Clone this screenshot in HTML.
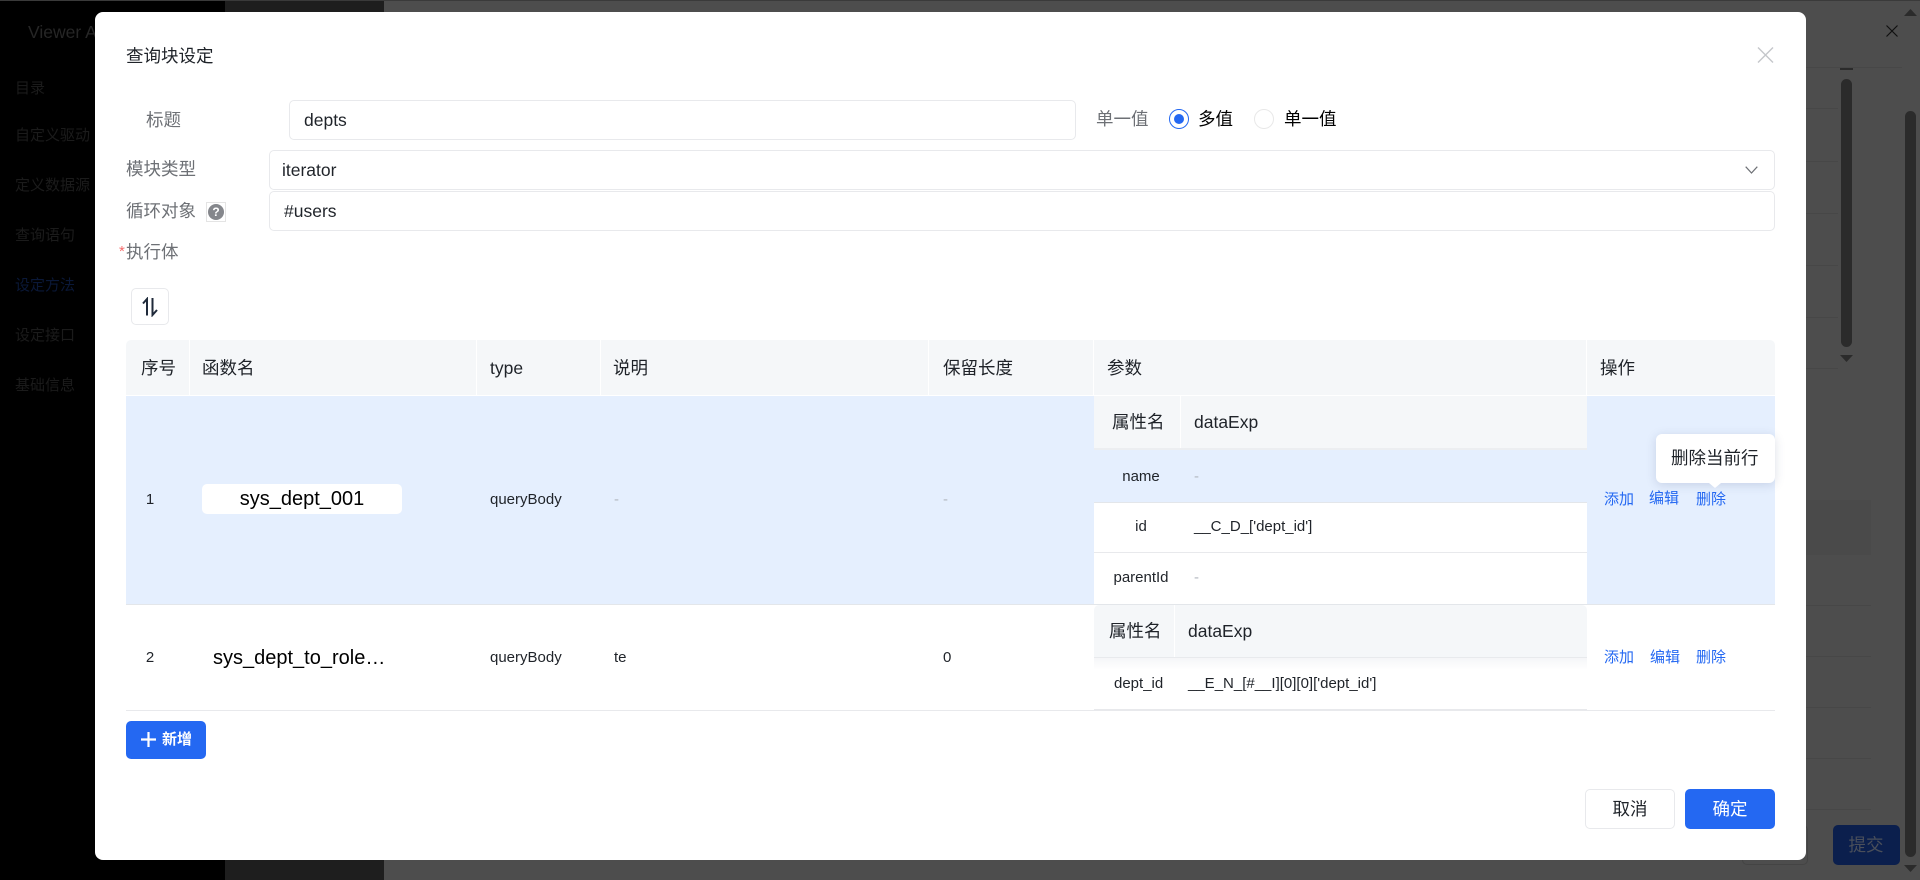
<!DOCTYPE html>
<html lang="zh-CN">
<head>
<meta charset="utf-8">
<title>查询块设定</title>
<style>
html,body{margin:0;padding:0;width:1920px;height:880px;overflow:hidden;background:#4d4d4d}
body{position:relative;font-family:"Liberation Sans","Noto Sans CJK SC",sans-serif;font-size:17.5px;color:#1f2329}
div,span,svg{position:absolute;box-sizing:border-box}
.t{white-space:nowrap;line-height:24px;height:24px}
.s{font-size:15px;line-height:20px;height:20px}
.c{transform:translateX(-50%)}
.g{color:#6d7075}
.l{color:#2468f2}
.d{color:#b3b8c0}
.side{color:#1b1b1b;font-size:15px;left:15px}
.box{border:1.25px solid #e8e9ec;border-radius:5px;background:#fff}
.bgl{background:#474747;height:1px}
.sb{background:#2b2b2b;border-radius:6px}
</style>
</head>
<body>
<!-- backdrop -->
<div style="left:0;top:0;width:225px;height:880px;background:#000"></div>
<div style="left:225px;top:0;width:159px;height:880px;background:#1e1e1e"></div>
<div style="left:0;top:0;width:1920px;height:1px;background:#3a3a3a"></div>
<div class="t" style="left:28px;top:20px;color:#262626;font-size:17.5px">Viewer Admin</div>
<div class="t side" style="top:77px">目录</div>
<div class="t side" style="top:124px">自定义驱动</div>
<div class="t side" style="top:174px">定义数据源</div>
<div class="t side" style="top:224px">查询语句</div>
<div class="t side" style="top:274px;color:#0a1838">设定方法</div>
<div class="t side" style="top:324px">设定接口</div>
<div class="t side" style="top:374px">基础信息</div>
<div class="bgl" style="left:1806px;top:67px;width:96px"></div>
<div class="bgl" style="left:1806px;top:108px;width:32px"></div>
<div class="bgl" style="left:1806px;top:161px;width:32px"></div>
<div class="bgl" style="left:1806px;top:213px;width:32px"></div>
<div class="bgl" style="left:1806px;top:265px;width:32px"></div>
<div class="bgl" style="left:1806px;top:317px;width:32px"></div>
<div class="bgl" style="left:1806px;top:368px;width:32px"></div>
<div style="left:1806px;top:500px;width:65px;height:55px;background:#4a4a4a"></div>
<div class="bgl" style="left:1806px;top:605px;width:65px"></div>
<div class="bgl" style="left:1806px;top:656px;width:65px"></div>
<div class="bgl" style="left:1806px;top:707px;width:65px"></div>
<div class="bgl" style="left:1806px;top:758px;width:65px"></div>
<div class="bgl" style="left:1806px;top:809px;width:65px"></div>
<div style="left:1742px;top:825px;width:66px;height:40px;border:1px solid #444;border-radius:5px"></div>
<div class="sb" style="left:1841px;top:79px;width:11px;height:268px"></div>
<div class="sb" style="left:1905px;top:111px;width:11px;height:746px"></div>
<div style="left:1840px;top:68px;width:13px;height:2px;background:#2b2b2b"></div>
<svg style="left:1840px;top:355px" width="13" height="7"><polygon points="0,0 13,0 6.5,7" fill="#2b2b2b"/></svg>
<svg style="left:1904px;top:9px" width="13" height="7"><polygon points="0,7 13,7 6.5,0" fill="#2b2b2b"/></svg>
<svg style="left:1904px;top:865px" width="13" height="7"><polygon points="0,0 13,0 6.5,7" fill="#2b2b2b"/></svg>
<svg style="left:1886px;top:25px" width="12" height="12"><path d="M.5.5L11.5 11.5M11.5.5L.5 11.5" stroke="#111" stroke-width="1.2" fill="none"/></svg>
<div style="left:1833px;top:825px;width:67px;height:40px;background:#0b1f4d;border-radius:5px"></div>
<div class="t c" style="left:1866px;top:833px;color:#4a4f5a">提交</div>

<!-- modal -->
<div style="left:95px;top:12px;width:1711px;height:848px;background:#fff;border-radius:8px"></div>
<div class="t" style="left:126px;top:44px;color:#1f2329">查询块设定</div>
<svg style="left:1757px;top:47px" width="17" height="16"><path d="M1 .5L16 15.5M16 .5L1 15.5" stroke="#c4c6ca" stroke-width="1.4" fill="none"/></svg>

<div class="t g" style="left:146px;top:108px">标题</div>
<div class="box" style="left:289px;top:100px;width:787px;height:40px"></div>
<div class="t" style="left:304px;top:108px">depts</div>
<div class="t g" style="left:1096px;top:107px">单一值</div>
<div style="left:1169px;top:109px;width:20px;height:20px;border:1.25px solid #2468f2;border-radius:50%"></div>
<div style="left:1174px;top:114px;width:10px;height:10px;background:#2468f2;border-radius:50%"></div>
<div class="t" style="left:1198px;top:107px;color:#000">多值</div>
<div style="left:1254px;top:109px;width:20px;height:20px;border:1.25px solid #e8e8e8;border-radius:50%"></div>
<div class="t" style="left:1284px;top:107px;color:#000">单一值</div>

<div class="t g" style="left:126px;top:157px">模块类型</div>
<div class="box" style="left:269px;top:150px;width:1506px;height:40px"></div>
<div class="t" style="left:282px;top:158px">iterator</div>
<svg style="left:1745px;top:166px" width="13" height="8"><path d="M.7.7L6.5 7 12.3.7" stroke="#6d7075" stroke-width="1.2" fill="none"/></svg>

<div class="t g" style="left:126px;top:199px">循环对象</div>
<div style="left:206px;top:202px;width:20px;height:20px;border:1px solid #e4e4e4"></div>
<div style="left:208px;top:204px;width:16px;height:16px;border-radius:50%;background:#85878c;color:#fff;font-size:12px;font-weight:bold;line-height:16px;text-align:center">?</div>
<div class="box" style="left:269px;top:191px;width:1506px;height:40px"></div>
<div class="t" style="left:284px;top:199px">#users</div>

<div class="t" style="left:119px;top:240px;color:#f56c6c;font-size:15px;width:7px">*</div>
<div class="t g" style="left:126px;top:240px">执行体</div>

<div class="box" style="left:131px;top:288px;width:38px;height:37px"></div>
<svg style="left:141px;top:297px" width="18" height="20"><path d="M6 18.500V2L2 6.500" stroke="#1f2a3a" stroke-width="2" fill="none"/><path d="M11.500 1V18L16 13" stroke="#1f2a3a" stroke-width="2" fill="none"/></svg>

<!-- table header -->
<div style="left:126px;top:340px;width:1649px;height:55px;background:#f5f7f9;border-radius:5px 5px 0 0"></div>
<div style="left:189px;top:340px;width:1px;height:55px;background:#fff"></div>
<div style="left:476px;top:340px;width:1px;height:55px;background:#fff"></div>
<div style="left:600px;top:340px;width:1px;height:55px;background:#fff"></div>
<div style="left:928px;top:340px;width:1px;height:55px;background:#fff"></div>
<div style="left:1093px;top:340px;width:1px;height:55px;background:#fff"></div>
<div style="left:1586px;top:340px;width:1px;height:55px;background:#fff"></div>
<div class="t" style="left:141px;top:356px">序号</div>
<div class="t" style="left:202px;top:356px">函数名</div>
<div class="t" style="left:490px;top:356px">type</div>
<div class="t" style="left:613px;top:356px">说明</div>
<div class="t" style="left:943px;top:356px">保留长度</div>
<div class="t" style="left:1107px;top:356px">参数</div>
<div class="t" style="left:1600px;top:356px">操作</div>

<!-- row 1 -->
<div style="left:126px;top:396px;width:1649px;height:208px;background:#e5effe"></div>
<div style="left:126px;top:604px;width:1649px;height:1px;background:#e3e6ea"></div>
<div class="t s c" style="left:150px;top:490px">1</div>
<div style="left:202px;top:484px;width:200px;height:30px;background:#fff;border-radius:5px"></div>
<div class="t c" style="left:302px;top:487px;font-size:20px;color:#000">sys_dept_001</div>
<div class="t s" style="left:490px;top:490px">queryBody</div>
<div class="t s d" style="left:614px;top:490px">-</div>
<div class="t s d" style="left:943px;top:490px">-</div>

<div style="left:1094px;top:396px;width:493px;height:52px;background:#f5f7f9"></div>
<div style="left:1180px;top:396px;width:1px;height:52px;background:#fff"></div>
<div style="left:1094px;top:448px;width:493px;height:2px;background:#eceef1"></div>
<div class="t" style="left:1112px;top:410px">属性名</div>
<div class="t" style="left:1194px;top:410px">dataExp</div>
<div class="t s c" style="left:1141px;top:467px">name</div>
<div class="t s d" style="left:1194px;top:467px">-</div>
<div style="left:1094px;top:502px;width:493px;height:102px;background:#fff"></div>
<div style="left:1094px;top:552px;width:493px;height:1px;background:#e8e9ec"></div>
<div style="left:1094px;top:502px;width:493px;height:1px;background:#e3e6ea"></div>
<div class="t s c" style="left:1141px;top:517px">id</div>
<div class="t s" style="left:1194px;top:517px">__C_D_['dept_id']</div>
<div class="t s c" style="left:1141px;top:568px">parentId</div>
<div class="t s d" style="left:1194px;top:568px">-</div>

<div class="t s l" style="left:1604px;top:490px">添加</div>
<div class="t s l" style="left:1649px;top:489px">编辑</div>
<div class="t s l" style="left:1696px;top:490px">删除</div>

<!-- tooltip -->
<div style="left:1656px;top:434px;width:119px;height:49px;background:#fff;border-radius:6px;box-shadow:0 2px 10px rgba(60,80,120,.18)"></div>
<svg style="left:1709px;top:483px" width="12" height="5"><polygon points="0,0 12,0 6,5" fill="#fff"/></svg>
<div class="t" style="left:1671px;top:446px">删除当前行</div>

<!-- row 2 -->
<div style="left:126px;top:710px;width:1649px;height:1px;background:#e8e9ec"></div>
<div class="t s c" style="left:150px;top:648px">2</div>
<div class="t" style="left:213px;top:646px;font-size:20px;color:#000">sys_dept_to_role…</div>
<div class="t s" style="left:490px;top:648px">queryBody</div>
<div class="t s" style="left:614px;top:648px">te</div>
<div class="t s" style="left:943px;top:648px">0</div>

<div style="left:1094px;top:605px;width:493px;height:52px;background:#f5f7f9;border-radius:5px 5px 0 0"></div>
<div style="left:1174px;top:605px;width:1px;height:52px;background:#fff"></div>
<div style="left:1094px;top:657px;width:493px;height:1px;background:#e8eaed"></div>
<div style="left:1094px;top:658px;width:493px;height:12px;background:linear-gradient(#f5f6f8,#fff)"></div>
<div style="left:1094px;top:709px;width:493px;height:2px;background:#e8e9ec"></div>
<div class="t" style="left:1109px;top:619px">属性名</div>
<div class="t" style="left:1188px;top:619px">dataExp</div>
<div class="t s" style="left:1114px;top:674px">dept_id</div>
<div class="t s" style="left:1188px;top:674px">__E_N_[#__I][0][0]['dept_id']</div>
<div class="t s l" style="left:1604px;top:648px">添加</div>
<div class="t s l" style="left:1650px;top:648px">编辑</div>
<div class="t s l" style="left:1696px;top:648px">删除</div>

<!-- add button -->
<div style="left:126px;top:721px;width:80px;height:38px;background:#2468f2;border-radius:5px"></div>
<svg style="left:141px;top:732px" width="15" height="15"><path d="M7.500 0V15M0 7.500H15" stroke="#fff" stroke-width="2.200" fill="none"/></svg>
<div class="t s" style="left:162px;top:730px;color:#fff;font-weight:bold">新增</div>

<!-- footer -->
<div class="box" style="left:1585px;top:789px;width:90px;height:40px"></div>
<div class="t c" style="left:1630px;top:797px">取消</div>
<div style="left:1685px;top:789px;width:90px;height:40px;background:#2468f2;border-radius:5px"></div>
<div class="t c" style="left:1730px;top:797px;color:#fff">确定</div>
</body>
</html>
